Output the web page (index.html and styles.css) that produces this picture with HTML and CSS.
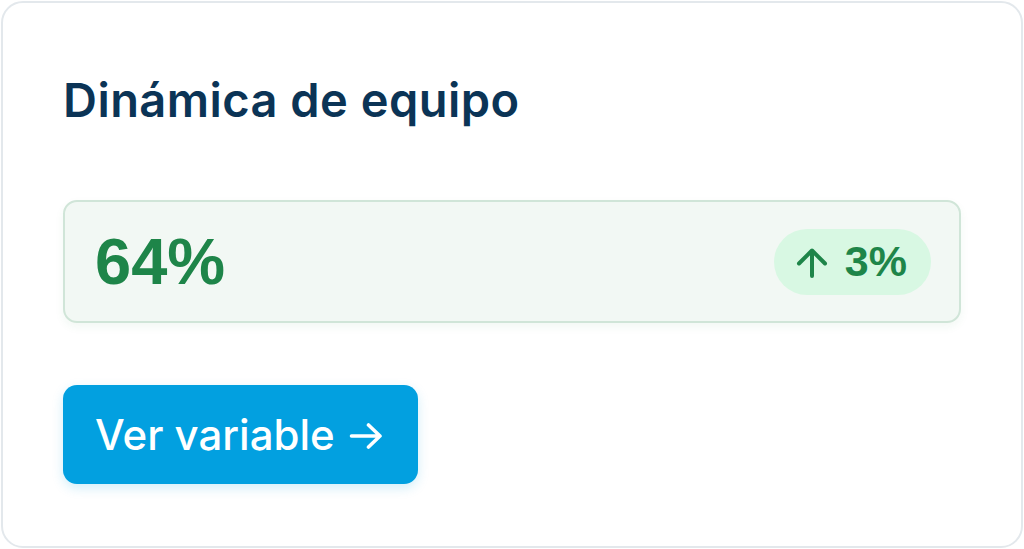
FILE: index.html
```html
<!DOCTYPE html>
<html lang="es">
<head>
<meta charset="utf-8">
<link rel="stylesheet" href="styles.css">
</head>
<body>
  <div class="card">
    <h2 class="title">Dinámica de equipo</h2>
    <div class="metric">
      <span class="value">64%</span>
      <span class="badge">
        <svg class="badge-arrow" width="34" height="30" viewBox="0 0 34 30" aria-hidden="true"><path d="M17 28V3M4 15.5L17 2.5L30 15.5" fill="none" stroke="currentColor" stroke-width="4" stroke-linecap="round" stroke-linejoin="round"/></svg>
        <span class="delta">3%</span>
      </span>
    </div>
    <button class="btn"><span class="btn-label">Ver variable</span><svg class="btn-arrow" width="34" height="26" viewBox="0 0 34 26" aria-hidden="true"><path d="M2.5 13H31M19.5 2L31 13L19.5 24" fill="none" stroke="currentColor" stroke-width="3.6" stroke-linecap="round" stroke-linejoin="round"/></svg></button>
  </div>
</body>
</html>
```
FILE: styles.css
```css
html, body {
  margin: 0;
  padding: 0;
  background: #ffffff;
}
body {
  font-family: Inter, "Liberation Sans", Arial, sans-serif;
  width: 1024px;
  height: 549px;
  overflow: hidden;
}
.card {
  box-sizing: border-box;
  margin: 1px;
  width: 1022px;
  height: 547px;
  border: 2px solid #e3e8ec;
  border-radius: 22px;
  padding: 60px;
  display: flex;
  flex-direction: column;
  align-items: flex-start;
  background: #ffffff;
}
.title {
  margin: 9px 0 0 0;
  font-size: 47px;
  line-height: 56px;
  font-weight: 600;
  color: #0b3456;
  letter-spacing: 0.45px;
}
.metric {
  box-sizing: border-box;
  margin-top: 72px;
  align-self: stretch;
  height: 123px;
  border: 2px solid #d0e5d8;
  border-radius: 14px;
  background: #f2f8f4;
  padding: 0 28px 0 30px;
  display: flex;
  align-items: center;
  justify-content: space-between;
  box-shadow: 0 4px 10px rgba(30, 138, 76, 0.06);
}
.value {
  font-family: "Liberation Sans", Arial, sans-serif;
  font-size: 65px;
  font-weight: 700;
  color: #1e8549;
  line-height: 1;
}
.badge {
  height: 66px;
  box-sizing: border-box;
  padding: 0 24px 0 21px;
  border-radius: 33px;
  background: #d8f8e3;
  color: #1e8549;
  display: flex;
  align-items: center;
  gap: 16px;
}
.badge-arrow {
  display: block;
  margin-top: 2px;
}
.delta {
  font-family: "Liberation Sans", Arial, sans-serif;
  font-size: 43px;
  font-weight: 700;
  line-height: 1;
}
.btn {
  box-sizing: border-box;
  margin-top: 62px;
  height: 99px;
  width: 355px;
  border: none;
  border-radius: 14px;
  background: #02a0e0;
  color: #ffffff;
  font-family: inherit;
  font-size: 42px;
  font-weight: 500;
  padding: 0 0 0 32px;
  display: flex;
  align-items: center;
  gap: 14px;
  box-shadow: 0 4px 12px rgba(2, 160, 224, 0.18);
}
.btn-label {
  line-height: 1;
}
.btn-arrow {
  display: block;
  margin-top: 2px;
}
```
